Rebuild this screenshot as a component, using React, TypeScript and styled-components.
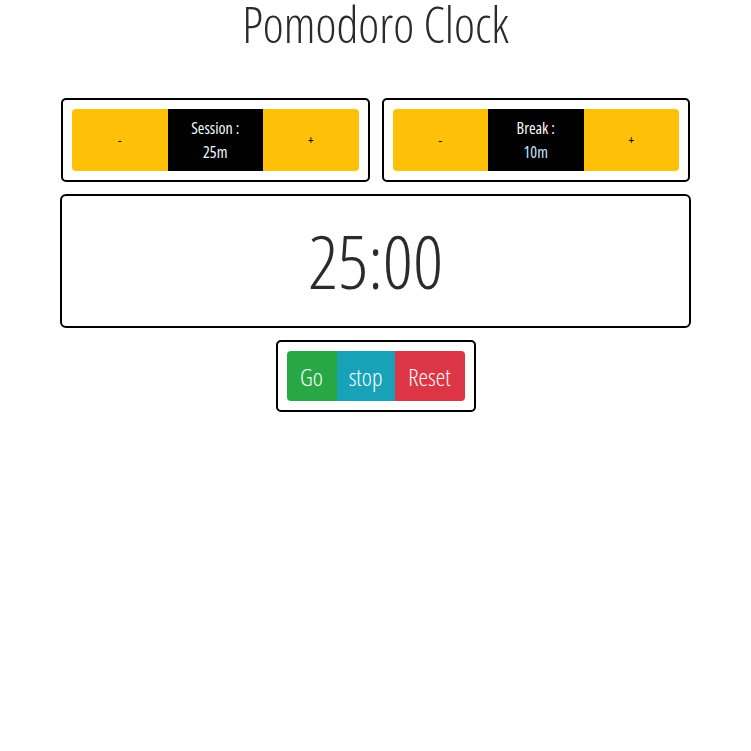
import React from "react";
import styled, { createGlobalStyle } from "styled-components";

const Global = createGlobalStyle`
  html, body { margin: 0; padding: 0; background: #fff; }
  body {
    font-family: "Open Sans", "Liberation Sans", sans-serif;
    font-stretch: 75%;
    font-weight: 300;
    color: #333;
  }
`;

const Page = styled.div`
  width: 631px;
  margin: 0 auto;
  display: flex;
  flex-direction: column;
  align-items: stretch;
`;

const Title = styled.h1`
  margin: 0;
  font-size: 50px;
  font-weight: 300;
  font-stretch: 75%;
  line-height: 48px;
  text-align: center;
  color: #2b2b2b;
`;

const SettingsRow = styled.div`
  margin: 50px 1px 0;
  display: flex;
  gap: 12px;
`;

const Panel = styled.div`
  flex: 1;
  border: 2px solid #000;
  border-radius: 5px;
  padding: 9px;
`;

const Group = styled.div`
  display: flex;
  height: 62px;
  border-radius: 4px;
  overflow: hidden;
`;

const Step = styled.button`
  flex: 1;
  border: 0;
  margin: 0;
  padding: 0;
  background: #ffc107;
  color: #000;
  font-family: inherit;
  font-stretch: 75%;
  font-weight: 400;
  font-size: 13px;
`;

const Display = styled.div`
  flex: 1;
  background: #000;
  display: flex;
  flex-direction: column;
  align-items: center;
  justify-content: center;
  font-size: 16px;
  font-weight: 400;
  line-height: 24px;
`;

const Label = styled.span<{ $tone: string }>`
  color: ${(p) => p.$tone};
`;

const TimerBox = styled.div`
  margin-top: 12px;
  height: 130px;
  border: 2px solid #000;
  border-radius: 6px;
  display: flex;
  align-items: center;
  justify-content: center;
`;

const Time = styled.div`
  font-size: 74px;
  font-weight: 300;
  color: #2b2b2b;
  line-height: 1;
`;

const ControlsBox = styled.div`
  margin: 12px auto 0;
  border: 2px solid #000;
  border-radius: 5px;
  padding: 9px;
  display: flex;
`;

const ControlGroup = styled.div`
  display: flex;
  height: 50px;
  border-radius: 4px;
  overflow: hidden;
`;

const Action = styled.button<{ $bg: string; $w: number }>`
  width: ${(p) => p.$w}px;
  border: 0;
  margin: 0;
  padding: 0;
  background: ${(p) => p.$bg};
  color: #fff;
  font-family: inherit;
  font-stretch: 75%;
  font-weight: 300;
  font-size: 24px;
`;

export default function App() {
  return (
    <>
      <Global />
      <Page>
        <Title>Pomodoro Clock</Title>
        <SettingsRow>
          <Panel>
            <Group>
              <Step>-</Step>
              <Display>
                <Label $tone="#f2fcff">Session :</Label>
                <Label $tone="#f2fcff">25m</Label>
              </Display>
              <Step>+</Step>
            </Group>
          </Panel>
          <Panel>
            <Group>
              <Step>-</Step>
              <Display>
                <Label $tone="#ffffff">Break :</Label>
                <Label $tone="#bfeaff">10m</Label>
              </Display>
              <Step>+</Step>
            </Group>
          </Panel>
        </SettingsRow>
        <TimerBox>
          <Time>25:00</Time>
        </TimerBox>
        <ControlsBox>
          <ControlGroup>
            <Action $bg="#28a745" $w={50}>Go</Action>
            <Action $bg="#17a2b8" $w={58}>stop</Action>
            <Action $bg="#dc3545" $w={70}>Reset</Action>
          </ControlGroup>
        </ControlsBox>
      </Page>
    </>
  );
}
